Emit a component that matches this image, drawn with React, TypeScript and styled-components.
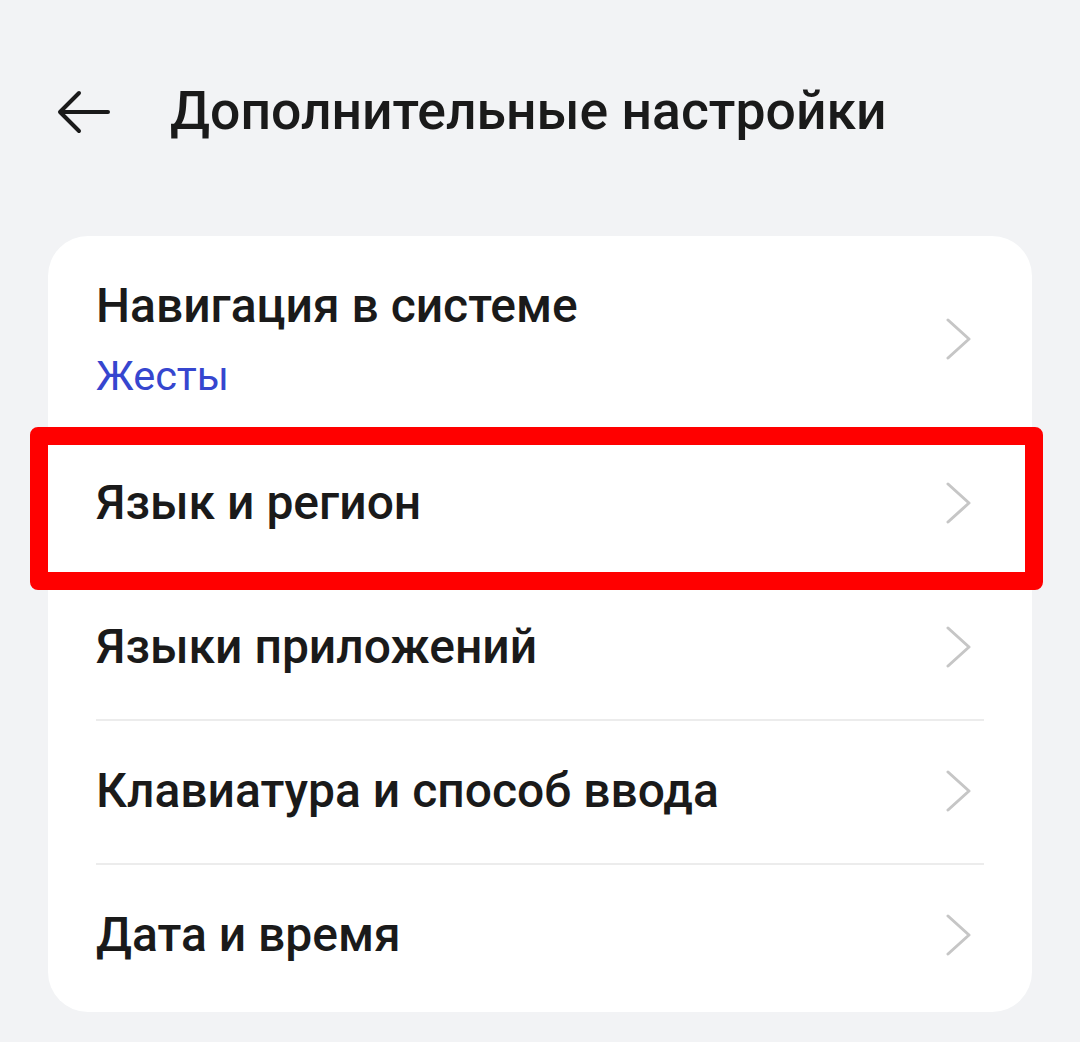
import React from 'react'
import styled, { createGlobalStyle } from 'styled-components'

const GlobalStyle = createGlobalStyle`
  html, body {
    margin: 0;
    padding: 0;
    background: #f2f3f5;
  }
  body {
    font-family: Roboto, "Noto Sans", sans-serif;
    color: #1a1a1a;
  }
`

const Page = styled.div`
  width: 1080px;
  min-height: 1042px;
  background: #f2f3f5;
  box-sizing: border-box;
  padding: 0 48px;
`

const Header = styled.div`
  display: flex;
  align-items: center;
  height: 236px;
  padding-bottom: 7px;
  box-sizing: border-box;
`

const BackButton = styled.button`
  display: flex;
  align-items: center;
  justify-content: center;
  width: 72px;
  height: 72px;
  margin: 0 0 6px 0;
  padding: 0;
  border: 0;
  background: none;
  color: #1a1a1a;
`

const Title = styled.h1`
  margin: 0 0 8px 50px;
  font-size: 53.5px;
  line-height: 63px;
  font-weight: 500;
  color: #1a1a1a;
`

const Card = styled.div`
  background: #ffffff;
  border-radius: 40px;
  padding-bottom: 5px;
`

const Row = styled.div<{ $tall?: boolean; $divider?: boolean }>`
  position: relative;
  display: flex;
  align-items: center;
  height: ${(p) => (p.$tall ? 195 : 144)}px;
  padding: ${(p) => (p.$tall ? 10 : 0)}px 60px 0 48px;
  box-sizing: border-box;
  &::after {
    content: '';
    display: ${(p) => (p.$divider ? 'block' : 'none')};
    position: absolute;
    left: 48px;
    right: 48px;
    top: 0;
    height: 2px;
    background: #ececec;
  }
`

const RowText = styled.div`
  flex: 1;
  display: flex;
  flex-direction: column;
  gap: 18px;
`

const RowTitle = styled.div`
  font-size: 48px;
  font-weight: 500;
  color: #1a1a1a;
  line-height: 56px;
`

const RowValue = styled.div`
  font-size: 41.5px;
  font-weight: 400;
  color: #3646cf;
  line-height: 48px;
`

const Highlight = styled.div`
  position: absolute;
  left: -18px;
  right: -11px;
  top: -4px;
  bottom: -15px;
  border: 18px solid #ff0000;
  border-radius: 8px;
  pointer-events: none;
`

const Chevron = () => (
  <svg width="26" height="42" viewBox="0 0 26 42" fill="none">
    <path d="M2 2 L23 21 L2 40" stroke="#c6c6c6" strokeWidth="3" strokeLinecap="round" strokeLinejoin="round" />
  </svg>
)

const BackArrow = () => (
  <svg width="56" height="44" viewBox="0 0 56 44" fill="none">
    <path d="M52 22 H5 M23 3 L4 22 L23 41" stroke="#1a1a1a" strokeWidth="4" strokeLinecap="round" strokeLinejoin="round" />
  </svg>
)

const items = [
  { title: 'Языки приложений' },
  { title: 'Клавиатура и способ ввода' },
  { title: 'Дата и время' },
]

export default function App() {
  return (
    <>
      <GlobalStyle />
      <Page>
        <Header>
          <BackButton>
            <BackArrow />
          </BackButton>
          <Title>Дополнительные настройки</Title>
        </Header>
        <Card>
          <Row $tall>
            <RowText>
              <RowTitle>Навигация в системе</RowTitle>
              <RowValue>Жесты</RowValue>
            </RowText>
            <Chevron />
          </Row>
          <Row>
            <RowText>
              <RowTitle>Язык и регион</RowTitle>
            </RowText>
            <Chevron />
            <Highlight />
          </Row>
          {items.map((it, i) => (
            <Row key={it.title} $divider={i > 0}>
              <RowText>
                <RowTitle>{it.title}</RowTitle>
              </RowText>
              <Chevron />
            </Row>
          ))}
        </Card>
      </Page>
    </>
  )
}
